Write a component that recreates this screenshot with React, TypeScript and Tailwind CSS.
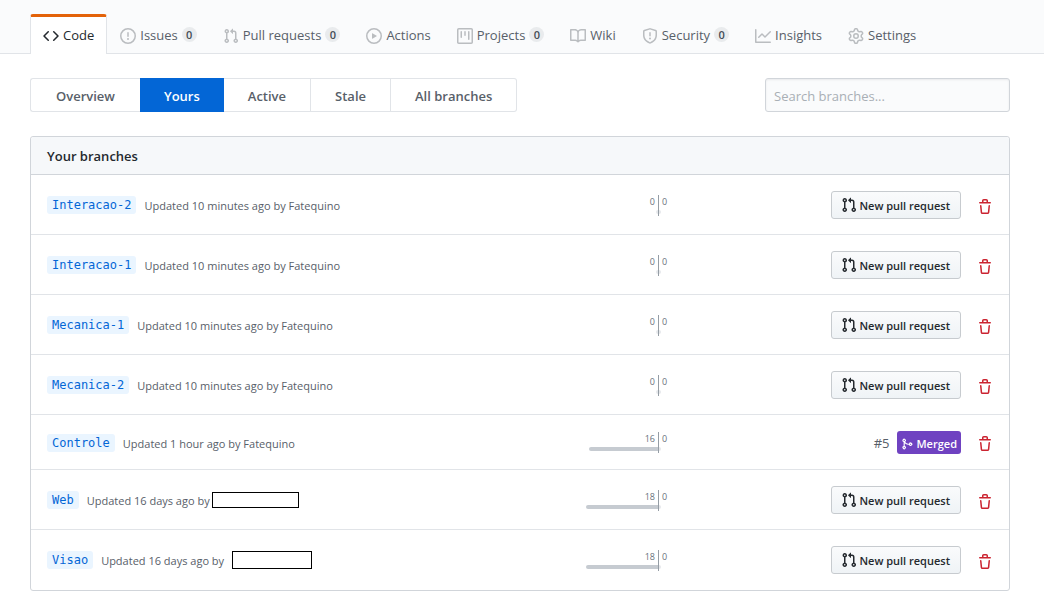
import type { ReactNode } from "react";

const ICONS = {
  code: "M4.72 3.22a.75.75 0 011.06 1.06L2.06 8l3.72 3.72a.75.75 0 11-1.06 1.06L.47 8.53a.75.75 0 010-1.06l4.25-4.25zm6.56 0a.75.75 0 10-1.06 1.06L13.94 8l-3.72 3.72a.75.75 0 101.06 1.06l4.25-4.25a.75.75 0 000-1.06l-4.25-4.25z",
  issue:
    "M8 1.5a6.5 6.5 0 100 13 6.5 6.5 0 000-13zM0 8a8 8 0 1116 0A8 8 0 010 8zm9 3a1 1 0 11-2 0 1 1 0 012 0zm-.25-6.25a.75.75 0 00-1.5 0v3.5a.75.75 0 001.5 0v-3.5z",
  pull: "M7.177 3.073L9.573.677A.25.25 0 0110 .854v4.792a.25.25 0 01-.427.177L7.177 3.427a.25.25 0 010-.354zM3.75 2.5a.75.75 0 100 1.5.75.75 0 000-1.5zm-2.25.75a2.25 2.25 0 113 2.122v5.256a2.251 2.251 0 11-1.5 0V5.372A2.25 2.25 0 011.5 3.25zM11 2.5h-1V4h1a1 1 0 011 1v5.628a2.251 2.251 0 101.5 0V5A2.5 2.5 0 0011 2.5zm1 10.25a.75.75 0 111.5 0 .75.75 0 01-1.5 0zM3.75 12a.75.75 0 100 1.5.75.75 0 000-1.5z",
  play: "M1.5 8a6.5 6.5 0 1113 0 6.5 6.5 0 01-13 0zM8 0a8 8 0 100 16A8 8 0 008 0zM6.379 5.227A.25.25 0 006 5.442v5.117a.25.25 0 00.379.214l4.264-2.559a.25.25 0 000-.428L6.379 5.227z",
  project:
    "M1.75 0A1.75 1.75 0 000 1.75v12.5C0 15.216.784 16 1.75 16h12.5A1.75 1.75 0 0016 14.25V1.75A1.75 1.75 0 0014.25 0H1.75zM1.5 1.75a.25.25 0 01.25-.25h12.5a.25.25 0 01.25.25v12.5a.25.25 0 01-.25.25H1.75a.25.25 0 01-.25-.25V1.75zM11.75 3a.75.75 0 00-.75.75v7.5a.75.75 0 001.5 0v-7.5a.75.75 0 00-.75-.75zm-8.25.75a.75.75 0 011.5 0v5.5a.75.75 0 01-1.5 0v-5.5zM8 3a.75.75 0 00-.75.75v3.5a.75.75 0 001.5 0v-3.5A.75.75 0 008 3z",
  book: "M0 1.75A.75.75 0 01.75 1h4.253c1.227 0 2.317.59 3 1.501A3.744 3.744 0 0111.006 1h4.245a.75.75 0 01.75.75v10.5a.75.75 0 01-.75.75h-4.507a2.25 2.25 0 00-1.591.659l-.622.621a.75.75 0 01-1.06 0l-.622-.621A2.25 2.25 0 005.258 13H.75a.75.75 0 01-.75-.75V1.75zm8.755 3a2.25 2.25 0 012.25-2.25H14.5v9h-3.757c-.71 0-1.4.201-1.992.572l.004-7.322zm-1.504 7.324l.004-5.073-.002-2.253A2.25 2.25 0 005.003 2.5H1.5v9h3.757a3.75 3.75 0 011.994.574z",
  shield:
    "M7.467.133a1.75 1.75 0 011.066 0l5.25 1.68A1.75 1.75 0 0115 3.48V7c0 1.566-.32 3.182-1.303 4.682-.983 1.498-2.585 2.813-5.032 3.855a1.7 1.7 0 01-1.33 0c-2.447-1.042-4.049-2.357-5.032-3.855C1.32 10.182 1 8.566 1 7V3.48a1.75 1.75 0 011.217-1.667l5.25-1.68zm.61 1.429a.25.25 0 00-.153 0l-5.25 1.68a.25.25 0 00-.174.238V7c0 1.358.275 2.666 1.057 3.86.784 1.194 2.121 2.34 4.366 3.297a.2.2 0 00.154 0c2.245-.956 3.582-2.104 4.366-3.298C13.225 9.666 13.5 8.36 13.5 7V3.48a.25.25 0 00-.174-.237l-5.25-1.68zM9 10.5a1 1 0 11-2 0 1 1 0 012 0zm-.25-5.75a.75.75 0 10-1.5 0v3a.75.75 0 001.5 0v-3z",
  graph:
    "M1.5 1.75a.75.75 0 00-1.5 0v12.5c0 .414.336.75.75.75h14.5a.75.75 0 000-1.5H1.5V1.75zm14.28 2.53a.75.75 0 00-1.06-1.06L10 7.94 7.53 5.47a.75.75 0 00-1.06 0L3.22 8.72a.75.75 0 001.06 1.06L7 7.06l2.47 2.47a.75.75 0 001.06 0l5.25-5.25z",
  gear: "M7.429 1.525a6.593 6.593 0 011.142 0c.036.003.108.036.137.146l.289 1.105c.147.56.55.967.997 1.189.174.086.341.183.501.29.417.278.97.423 1.53.27l1.102-.303c.11-.03.175.016.195.046.219.31.41.641.573.989.014.031.022.11-.059.19l-.815.806c-.411.406-.562.957-.53 1.456a4.588 4.588 0 010 .582c-.032.499.119 1.05.53 1.456l.815.806c.08.08.073.159.059.19a6.494 6.494 0 01-.573.99c-.02.029-.086.074-.195.045l-1.103-.303c-.559-.153-1.112-.008-1.529.27-.16.107-.327.204-.5.29-.449.222-.851.628-.998 1.189l-.289 1.105c-.029.11-.101.143-.137.146a6.613 6.613 0 01-1.142 0c-.036-.003-.108-.037-.137-.146l-.289-1.105c-.147-.56-.55-.967-.997-1.189a4.502 4.502 0 01-.501-.29c-.417-.278-.97-.423-1.53-.27l-1.102.303c-.11.03-.175-.016-.195-.046a6.492 6.492 0 01-.573-.989c-.014-.031-.022-.11.059-.19l.815-.806c.411-.406.562-.957.53-1.456a4.587 4.587 0 010-.582c.032-.499-.119-1.05-.53-1.456l-.815-.806c-.08-.08-.073-.159-.059-.19a6.44 6.44 0 01.573-.99c.02-.029.086-.075.195-.045l1.103.303c.559.153 1.112.008 1.529-.27.16-.107.327-.204.5-.29.449-.222.851-.628.998-1.189l.289-1.105c.029-.11.101-.143.137-.146zM8 0c-.236 0-.47.01-.701.03-.743.065-1.29.615-1.458 1.261l-.29 1.106c-.017.066-.078.158-.211.224a5.994 5.994 0 00-.668.386c-.123.082-.233.09-.3.071L3.27 2.776c-.644-.177-1.392.02-1.82.63a7.977 7.977 0 00-.704 1.217c-.315.675-.111 1.422.363 1.891l.815.806c.05.048.098.147.088.294a6.084 6.084 0 000 .772c.01.147-.038.246-.088.294l-.815.806c-.474.469-.678 1.216-.363 1.891.2.428.436.835.704 1.218.428.609 1.176.806 1.82.63l1.103-.303c.066-.019.176-.011.299.071.213.143.436.272.668.386.133.066.194.158.212.224l.289 1.106c.169.646.715 1.196 1.458 1.26a8.094 8.094 0 001.402 0c.743-.064 1.29-.614 1.458-1.26l.29-1.106c.017-.066.078-.158.211-.224a5.98 5.98 0 00.668-.386c.123-.082.233-.09.3-.071l1.102.302c.644.177 1.392-.02 1.82-.63.268-.382.505-.789.704-1.217.315-.675.111-1.422-.364-1.891l-.814-.806c-.05-.048-.098-.147-.088-.294a6.1 6.1 0 000-.772c-.01-.147.039-.246.088-.294l.814-.806c.475-.469.679-1.216.364-1.891a7.992 7.992 0 00-.704-1.218c-.428-.609-1.176-.806-1.82-.63l-1.103.303c-.066.019-.176.011-.299-.071a5.991 5.991 0 00-.668-.386c-.133-.066-.194-.158-.212-.224L10.16 1.29C9.99.645 9.444.095 8.701.031A8.094 8.094 0 008 0zm1.5 8a1.5 1.5 0 11-3 0 1.5 1.5 0 013 0zM11 8a3 3 0 11-6 0 3 3 0 016 0z",
  merge:
    "M5 3.254V3.25v.005a.75.75 0 110-.005v.004zm.45 1.9a2.25 2.25 0 10-1.95.218v5.256a2.25 2.25 0 101.5 0V7.123A5.735 5.735 0 009.25 9h1.378a2.251 2.251 0 100-1.5H9.25a4.25 4.25 0 01-3.8-2.346zM12.75 9a.75.75 0 100-1.5.75.75 0 000 1.5zm-8.5 4.5a.75.75 0 100-1.5.75.75 0 000 1.5z",
  trash:
    "M6.5 1.75a.25.25 0 01.25-.25h2.5a.25.25 0 01.25.25V3h-3V1.75zm4.5 0V3h2.25a.75.75 0 010 1.5H2.75a.75.75 0 010-1.5H5V1.75C5 .784 5.784 0 6.75 0h2.5C10.216 0 11 .784 11 1.75zM4.496 6.675a.75.75 0 10-1.492.15l.66 6.6A1.75 1.75 0 005.405 15h5.19c.9 0 1.652-.681 1.741-1.576l.66-6.6a.75.75 0 00-1.492-.149l-.66 6.6a.25.25 0 01-.249.225h-5.19a.25.25 0 01-.249-.225l-.66-6.6z",
};

type IconName = keyof typeof ICONS;

function Icon({ name, className = "size-4" }: { name: IconName; className?: string }) {
  return (
    <svg viewBox="0 0 16 16" fill="currentColor" fillRule="evenodd" aria-hidden="true" className={`shrink-0 ${className}`}>
      <path d={ICONS[name]} />
    </svg>
  );
}

const TABS: { icon: IconName; label: string; count?: number }[] = [
  { icon: "code", label: "Code" },
  { icon: "issue", label: "Issues", count: 0 },
  { icon: "pull", label: "Pull requests", count: 0 },
  { icon: "play", label: "Actions" },
  { icon: "project", label: "Projects", count: 0 },
  { icon: "book", label: "Wiki" },
  { icon: "shield", label: "Security", count: 0 },
  { icon: "graph", label: "Insights" },
  { icon: "gear", label: "Settings" },
];

function RepoNav() {
  return (
    <nav aria-label="Repository" className="flex border-b border-[#e1e4e8] bg-[#fafbfc] pt-3.5 pl-[30px]">
      {TABS.map((tab, i) => (
        <a
          key={tab.label}
          href="#"
          aria-current={i === 0 ? "page" : undefined}
          className={
            i === 0
              ? "-mb-px flex h-10 items-center gap-1 rounded-t-[3px] border-x border-t-3 border-x-[#e1e4e8] border-t-[#e36209] bg-white px-3 whitespace-nowrap text-[#24292e]"
              : "-mb-px flex h-10 items-center gap-1 border-x border-t-3 border-transparent px-3 whitespace-nowrap text-[#586069]"
          }
        >
          <Icon name={tab.icon} className={i === 0 ? "size-4" : "size-4 text-[#babdc0]"} />
          <span className="pb-0.5">{tab.label}</span>
          {tab.count !== undefined && (
            <span className="mb-0.5 flex size-[15px] items-center justify-center rounded-full bg-[#e9ebed] text-[11px] font-semibold text-[#444d56]">
              {tab.count}
            </span>
          )}
        </a>
      ))}
    </nav>
  );
}

const FILTERS = ["Overview", "Yours", "Active", "Stale", "All branches"];

function Filters() {
  return (
    <div className="flex items-center justify-between">
      <nav aria-label="Branch filters" className="flex font-semibold text-[#586069]">
        {FILTERS.map((f) => (
          <a
            key={f}
            href="#"
            aria-current={f === "Yours" ? "page" : undefined}
            className={
              f === "Yours"
                ? "flex h-[34px] items-center bg-[#0366d6] px-6 pt-0.5 text-white"
                : "flex h-[34px] items-center border-y border-r border-[#e1e4e8] px-6 pt-0.5 first:rounded-l-[3px] first:border-r-0 first:border-l first:px-[25px] last:rounded-r-[3px]"
            }
          >
            {f}
          </a>
        ))}
      </nav>
      <input
        type="search"
        aria-label="Search branches"
        placeholder="Search branches..."
        className="h-[34px] w-[245px] rounded-[3px] border border-[#d1d5da] bg-[#fafbfc] px-2 pt-0.5 shadow-[inset_0_1px_2px_rgba(27,31,35,0.075)] outline-none placeholder:text-[#a9afb5]"
      />
    </div>
  );
}

type Branch = {
  name: string;
  updated: string;
  author?: string;
  hidden?: ReactNode;
  behind: number;
  bar: number;
  merged?: string;
};

const BRANCHES: Branch[] = [
  { name: "Interacao-2", updated: "10 minutes ago", author: "Fatequino", behind: 0, bar: 2 },
  { name: "Interacao-1", updated: "10 minutes ago", author: "Fatequino", behind: 0, bar: 2 },
  { name: "Mecanica-1", updated: "10 minutes ago", author: "Fatequino", behind: 0, bar: 2 },
  { name: "Mecanica-2", updated: "10 minutes ago", author: "Fatequino", behind: 0, bar: 2 },
  { name: "Controle", updated: "1 hour ago", author: "Fatequino", behind: 16, bar: 69, merged: "#5" },
  {
    name: "Web",
    updated: "16 days ago",
    hidden: <span className="ml-0.5 h-4 w-[87px] border border-black bg-white" />,
    behind: 18,
    bar: 72,
  },
  {
    name: "Visao",
    updated: "16 days ago",
    hidden: <span className="ml-2 h-[18px] w-20 border border-black bg-white" />,
    behind: 18,
    bar: 72,
  },
];

function Divergence({ behind, bar }: { behind: number; bar: number }) {
  return (
    <div className="flex h-[21px] w-[220px] shrink-0 text-[9px] leading-[14px] text-[#6a737d]">
      <div className="flex w-[111px] flex-col items-end border-r border-[#959da5]">
        <span className="h-[15px] pr-[3px]">{behind}</span>
        <span
          className={behind > 0 ? "h-1 rounded-l-full bg-[#c6cbd1]" : "h-1 rounded-l-full bg-[#e6e8eb]"}
          style={{ width: bar }}
        />
      </div>
      <div className="flex flex-1 flex-col items-start">
        <span className="h-[15px] pl-[3px]">0</span>
        <span className="h-1 w-0.5 rounded-r-full bg-[#e6e8eb]" />
      </div>
    </div>
  );
}

function BranchRow({ branch }: { branch: Branch }) {
  return (
    <li className="flex items-center border-t border-[#e1e4e8] px-4 pt-4 pb-[15px] first:border-[#d1d5da]">
      <div className="flex min-w-0 flex-1 items-center whitespace-nowrap">
        <a
          href="#"
          className="mr-2 rounded-[3px] bg-[#eaf5ff] px-[5px] font-['DejaVu_Sans_Mono',monospace] text-[12px] leading-[18px] text-[#0366d6]"
        >
          {branch.name}
        </a>
        <span className="pt-0.5 text-[11px] leading-[18px] text-[#586069]">
          Updated {branch.updated} by {branch.author}
        </span>
        {branch.hidden}
      </div>
      <Divergence behind={branch.behind} bar={branch.bar} />
      <div className="flex w-[225px] shrink-0 items-center justify-end">
        {branch.merged ? (
          <>
            <a href="#" className="mr-2 leading-5 text-[#586069]">
              {branch.merged}
            </a>
            <a
              href="#"
              className="flex h-[23px] items-center gap-[3px] rounded-[3px] bg-[#6f42c1] px-1 pt-0.5 text-[11px] font-semibold text-white"
            >
              <Icon name="merge" className="size-3" />
              Merged
            </a>
          </>
        ) : (
          <button
            type="button"
            className="flex h-7 items-center gap-0.5 rounded-[3px] border border-[#c7cbcf] bg-linear-to-b from-[#fafbfc] to-[#eff3f6] pr-2.5 pl-[9px] text-[11px] font-semibold whitespace-nowrap text-[#24292e]"
          >
            <Icon name="pull" />
            <span className="pt-0.5">New pull request</span>
          </button>
        )}
        <button type="button" aria-label={`Delete branch ${branch.name}`} className="ml-4 pt-[3px] text-[#cb2431]">
          <Icon name="trash" />
        </button>
      </div>
    </li>
  );
}

export default function App() {
  return (
    <div className="min-h-screen bg-white font-['Open_Sans','Noto_Sans',sans-serif] text-[13px] leading-5 text-[#24292e]">
      <RepoNav />
      <main className="flex flex-col gap-6 py-6 pr-[34px] pl-[30px]">
        <Filters />
        <section className="rounded-[3px] border border-[#d1d5da]">
          <h1 className="rounded-t-[3px] bg-[#f6f8fa] px-4 pt-[9px] pb-2 font-semibold">Your branches</h1>
          <ul className="pb-px">
            {BRANCHES.map((b) => (
              <BranchRow key={b.name} branch={b} />
            ))}
          </ul>
        </section>
      </main>
    </div>
  );
}
